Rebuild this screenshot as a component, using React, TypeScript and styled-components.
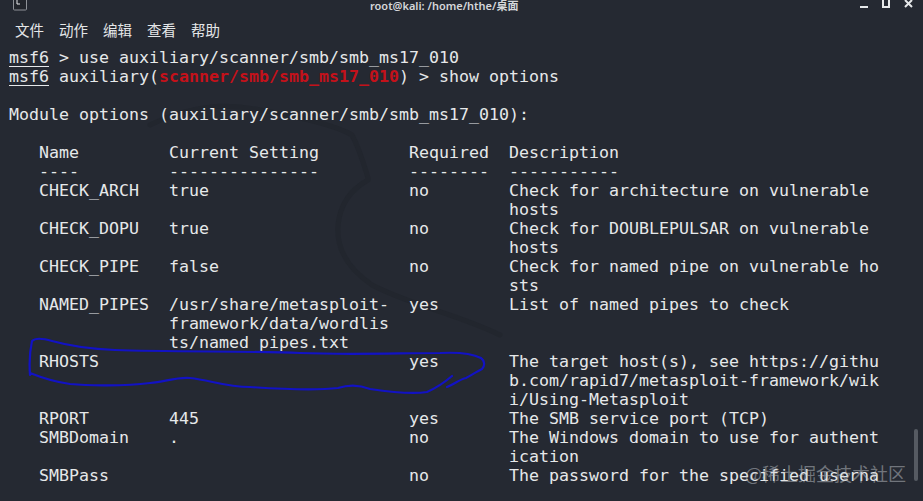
import React from "react";
import styled, { createGlobalStyle } from "styled-components";

const Global = createGlobalStyle`
  html, body { margin: 0; padding: 0; background: #252932; }
  body { width: 923px; height: 501px; overflow: hidden; }
`;

const Win = styled.div`
  position: relative;
  display: flex;
  flex-direction: column;
  width: 923px;
  height: 501px;
  overflow: hidden;
  background: #252932;
  color: #e6e8ea;
  font-family: "DejaVu Sans Mono", monospace;
`;
const TitleBar = styled.div`
  position: relative;
  display: flex;
  align-items: flex-start;
  flex: none;
  height: 11px;
  padding-left: 12px;
`;
const AppIcon = styled.svg`
  flex: none;
  display: block;
`;
const Title = styled.div`
  margin-left: 342px;
  font-family: "Noto Sans", "Noto Sans CJK SC", sans-serif;
  font-size: 11px;
  font-weight: 600;
  line-height: 11px;
  color: #d5d7da;
  white-space: nowrap;
`;
const Controls = styled.div`
  display: flex;
  align-items: flex-start;
  gap: 13px;
  margin-left: auto;
  padding-right: 10px;
`;
const Menu = styled.div`
  display: flex;
  flex: none;
  gap: 15px;
  height: 22px;
  margin-top: 8px;
  padding-left: 15px;
  font-family: "Noto Sans CJK SC", sans-serif;
  font-size: 14.5px;
  line-height: 22px;
  color: #e4e6e8;
`;
const Output = styled.div`
  position: relative;
  margin-top: 7px;
  padding-left: 9px;
  font-size: 16.63px;
  line-height: 19px;
`;
const Line = styled.div`
  height: 19px;
  white-space: pre;
`;
const Prompt = styled.span`
  text-decoration: underline;
  text-underline-offset: 3px;
`;
const Red = styled.span`
  color: #c4111a;
  font-weight: 700;
`;
const Drawing = styled.svg`
  position: absolute;
  left: 0;
  top: 0;
  pointer-events: none;
`;
const Scroll = styled.div`
  position: absolute;
  left: 914px;
  top: 429px;
  width: 4px;
  height: 52px;
  border-radius: 2px;
  background: #565a62;
`;
const Mark = styled.div`
  position: absolute;
  left: 745px;
  top: 461px;
  font-family: "Noto Sans CJK SC", sans-serif;
  font-size: 18px;
  line-height: 24px;
  color: rgba(190, 193, 198, 0.5);
  white-space: nowrap;
`;

const lines = [
  "Module options (auxiliary/scanner/smb/smb_ms17_010):",
  "",
  "   Name         Current Setting         Required  Description",
  "   ----         ---------------         --------  -----------",
  "   CHECK_ARCH   true                    no        Check for architecture on vulnerable",
  "                                                  hosts",
  "   CHECK_DOPU   true                    no        Check for DOUBLEPULSAR on vulnerable",
  "                                                  hosts",
  "   CHECK_PIPE   false                   no        Check for named pipe on vulnerable ho",
  "                                                  sts",
  "   NAMED_PIPES  /usr/share/metasploit-  yes       List of named pipes to check",
  "                framework/data/wordlis",
  "                ts/named_pipes.txt",
  "   RHOSTS                               yes       The target host(s), see https://githu",
  "                                                  b.com/rapid7/metasploit-framework/wik",
  "                                                  i/Using-Metasploit",
  "   RPORT        445                     yes       The SMB service port (TCP)",
  "   SMBDomain    .                       no        The Windows domain to use for authent",
  "                                                  ication",
  "   SMBPass                              no        The password for the specified userna",
];

export default function App() {
  return (
    <Win>
      <Global />
      <Drawing width="923" height="501" viewBox="0 0 923 501">
        <path d="M150 125C190 105 225 103 260 110 C300 117 335 125 352 135 C360 150 364 165 368 178 M368 180C350 190 340 205 338 225 C336 250 350 270 372 285 C410 305 460 315 500 335" fill="none" stroke="#22262e" strokeWidth="5" strokeLinecap="round" />
      </Drawing>
      <TitleBar>
        <AppIcon width="16" height="11" viewBox="0 0 16 11">
          <path d="M1.5 0v9a1 1 0 0 0 1 1h11a1 1 0 0 0 1-1V0" fill="#22252c" stroke="#8f9298" strokeWidth="1" />
          <path d="M5 0v4h3" fill="none" stroke="#e6e8ea" strokeWidth="1" />
        </AppIcon>
        <Title>root@kali: /home/hthe/桌面</Title>
        <Controls>
          <svg width="9" height="9" viewBox="0 0 9 9"><path d="M0 7h8" stroke="#e6e8ea" strokeWidth="2" /></svg>
          <svg width="9" height="9" viewBox="0 0 9 9"><path d="M1 -1h6v8H1z" fill="none" stroke="#e6e8ea" strokeWidth="2" /></svg>
          <svg width="9" height="9" viewBox="0 0 9 9"><path d="M1 0l7 7M8 0L1 7" stroke="#e6e8ea" strokeWidth="2" /></svg>
        </Controls>
      </TitleBar>
      <Menu>
        <span>文件</span><span>动作</span><span>编辑</span><span>查看</span><span>帮助</span>
      </Menu>
      <Output>
        <Line><Prompt>msf6</Prompt> &gt; use auxiliary/scanner/smb/smb_ms17_010</Line>
        <Line><Prompt>msf6</Prompt> auxiliary(<Red>scanner/smb/smb_ms17_010</Red>) &gt; show options</Line>
        <Line />
        {lines.map((l, i) => <Line key={i}>{l}</Line>)}
      </Output>
      <Drawing width="923" height="501" viewBox="0 0 923 501">
        <path d="M30 375 C29 362 30 350 32 341 C36 337 45 339 52 341 C70 346 90 349 115 350 C170 352 250 351 300 353 C350 355 400 353 440 353 C460 352 473 354 481 358 C485 361 485 366 482 369 C476 372 470 376 466 378 C460 379 455 384 447 387 M452 376 C445 382 436 388 427 392 C415 394 390 392 370 389 C360 385 350 384 338 388 C320 390 280 389 250 387 C225 387 210 380 190 378 C175 377 165 382 150 383 C125 386 90 386 70 384 C55 382 40 377 30 373" fill="none" stroke="#1212c4" strokeWidth="2.2" strokeLinecap="round" />
      </Drawing>
      <Scroll />
      <Mark>@稀土掘金技术社区</Mark>
    </Win>
  );
}
